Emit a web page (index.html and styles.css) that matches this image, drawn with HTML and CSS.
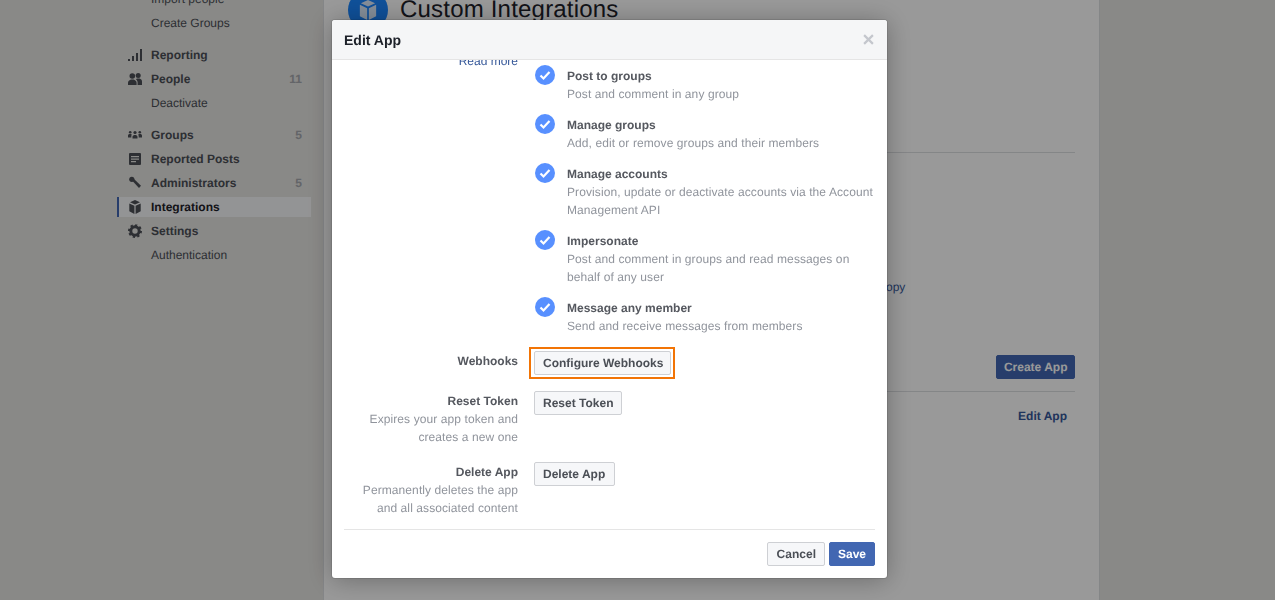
FILE: index.html
```html
<!DOCTYPE html>
<html>
<head>
  <title>Edit App</title>
  <link rel="stylesheet" href="styles.css">
</head>
<body>
  <div class="page">
    <nav class="sidebar">
      <div class="nav-group">
        <div class="nav-row sub"><span class="nav-label">Import people</span></div>
        <div class="nav-row sub"><span class="nav-label">Create Groups</span></div>
      </div>
      <div class="nav-group">
        <div class="nav-row">
          <svg class="nav-icon" viewBox="0 0 14 14"><path d="M0 11h2v2H0zM4 8h2v5H4zM8 5h2v8H8zM12 1h2v12h-2z"/></svg>
          <span class="nav-label">Reporting</span>
        </div>
        <div class="nav-row">
          <svg class="nav-icon" viewBox="0 0 14 14"><circle cx="4.300" cy="4" r="2.800"/><circle cx="10.200" cy="3.600" r="2.500"/><path d="M0 13v-2.200c0-1.800 1.600-2.600 3-3.300h2.600c1.400.7 3 1.500 3 3.300V13zM9.600 13v-2.600c0-1.300-.7-2.300-1.600-3l.8-.8h2.800c1.200.6 2.400 1.300 2.400 2.900V13z"/></svg>
          <span class="nav-label">People</span>
          <span class="count">11</span>
        </div>
        <div class="nav-row sub"><span class="nav-label">Deactivate</span></div>
      </div>
      <div class="nav-group">
        <div class="nav-row">
          <svg class="nav-icon" viewBox="0 0 14 14"><circle cx="7" cy="4.500" r="1.600"/><circle cx="2.200" cy="4.200" r="1.300"/><circle cx="11.800" cy="4.200" r="1.300"/><path d="M4.500 10.500V8.800c0-.9 1-1.600 1.600-1.800h1.800c.6.200 1.600.9 1.600 1.800v1.700zM0 9.500V7.500c0-.7.700-1.200 1.300-1.400h1.800l.7.600c-.4.400-.5 1-.5 1.600v1.200zM14 9.500V7.500c0-.7-.7-1.200-1.300-1.400h-1.800l-.7.600c.4.400.5 1 .5 1.600v1.200z"/></svg>
          <span class="nav-label">Groups</span>
          <span class="count">5</span>
        </div>
        <div class="nav-row">
          <svg class="nav-icon" viewBox="0 0 14 14"><path fill-rule="evenodd" d="M2 1h10a1 1 0 0 1 1 1v10a1 1 0 0 1-1 1H2a1 1 0 0 1-1-1V2a1 1 0 0 1 1-1zM3 4v1.200h8V4zM3 6.500v1.200h8V6.500zM3 9v1.200h5V9z"/></svg>
          <span class="nav-label">Reported Posts</span>
        </div>
        <div class="nav-row">
          <svg class="nav-icon" viewBox="0 0 14 14"><circle cx="3.800" cy="3.300" r="2.600"/><path d="M4.500 5l1.800-1.800 6.700 6.500-2 2.300z"/></svg>
          <span class="nav-label">Administrators</span>
          <span class="count">5</span>
        </div>
        <div class="nav-row active">
          <svg class="nav-icon" viewBox="0 0 14 14"><path d="M7 0l5 2.200L7 4.500 2 2.200zM1.300 3.400l5.100 2.300V14l-5.100-2.700zM12.700 3.400L7.600 5.700V14l5.100-2.700z"/></svg>
          <span class="nav-label">Integrations</span>
        </div>
        <div class="nav-row">
          <svg class="nav-icon" viewBox="0 0 14 14"><circle class="gear-ring" cx="7" cy="7" r="4.200"/><circle class="gear-teeth" cx="7" cy="7" r="6" pathLength="24"/></svg>
          <span class="nav-label">Settings</span>
        </div>
        <div class="nav-row sub"><span class="nav-label">Authentication</span></div>
      </div>
    </nav>

    <main class="content">
      <div class="content-head">
        <span class="head-icon">
          <svg viewBox="0 0 14 14"><path d="M7 0l5 2.200L7 4.500 2 2.200zM1.300 3.400l5.100 2.300V14l-5.100-2.700zM12.700 3.400L7.600 5.700V14l5.100-2.700z"/></svg>
        </span>
        <h1>Custom Integrations</h1>
      </div>
      <div class="content-line first"></div>
      <a class="copy-link">copy</a>
      <div class="create-row"><span class="btn primary">Create App</span></div>
      <div class="content-line"></div>
      <div class="edit-row"><a class="edit-link">Edit App</a></div>
    </main>
    <div class="rail"></div>
  </div>

  <div class="overlay">
    <div class="dialog">
      <div class="dialog-head">
        <span class="dialog-title">Edit App</span>
        <svg class="close" viewBox="0 0 10 10"><path d="M1 1l8 8M9 1l-8 8"/></svg>
      </div>
      <div class="dialog-body">
        <div class="form-row perms-row">
          <div class="form-label"><a class="read-more">Read more</a></div>
          <div class="perms">
            <div class="perm">
              <svg class="check" viewBox="0 0 20 20"><circle cx="10" cy="10" r="10"/><path d="M5.500 10.500l3 3 6-6.500"/></svg>
              <div class="perm-text"><b>Post to groups</b><p>Post and comment in any group</p></div>
            </div>
            <div class="perm">
              <svg class="check" viewBox="0 0 20 20"><circle cx="10" cy="10" r="10"/><path d="M5.500 10.500l3 3 6-6.500"/></svg>
              <div class="perm-text"><b>Manage groups</b><p>Add, edit or remove groups and their members</p></div>
            </div>
            <div class="perm">
              <svg class="check" viewBox="0 0 20 20"><circle cx="10" cy="10" r="10"/><path d="M5.500 10.500l3 3 6-6.500"/></svg>
              <div class="perm-text"><b>Manage accounts</b><p>Provision, update or deactivate accounts via the Account Management API</p></div>
            </div>
            <div class="perm">
              <svg class="check" viewBox="0 0 20 20"><circle cx="10" cy="10" r="10"/><path d="M5.500 10.500l3 3 6-6.500"/></svg>
              <div class="perm-text"><b>Impersonate</b><p>Post and comment in groups and read messages on behalf of any user</p></div>
            </div>
            <div class="perm">
              <svg class="check" viewBox="0 0 20 20"><circle cx="10" cy="10" r="10"/><path d="M5.500 10.500l3 3 6-6.500"/></svg>
              <div class="perm-text"><b>Message any member</b><p>Send and receive messages from members</p></div>
            </div>
          </div>
        </div>
        <div class="form-row">
          <div class="form-label"><b>Webhooks</b></div>
          <div><span class="focus-box"><button class="btn">Configure Webhooks</button></span></div>
        </div>
        <div class="form-row">
          <div class="form-label"><b>Reset Token</b><p>Expires your app token and creates a new one</p></div>
          <div><button class="btn">Reset Token</button></div>
        </div>
        <div class="form-row">
          <div class="form-label"><b>Delete App</b><p>Permanently deletes the app and all associated content</p></div>
          <div><button class="btn btn-delete">Delete App</button></div>
        </div>
      </div>
      <div class="dialog-foot">
        <button class="btn btn-cancel">Cancel</button>
        <button class="btn primary">Save</button>
      </div>
    </div>
  </div>
</body>
</html>
```

FILE: styles.css
```css
* {
  box-sizing: border-box;
  margin: 0;
  padding: 0;
}

html, body {
  height: 100%;
  overflow: hidden;
}

body {
  font-family: "Liberation Sans", Arial, sans-serif;
  font-size: 12px;
  line-height: 18px;
  color: #4b4f56;
  background-color: #e5e4e1;
  text-rendering: geometricPrecision;
}

/* page behind the dialog */
.page {
  display: flex;
  height: 600px;
}

.sidebar {
  width: 323px;
  flex: none;
  margin-top: -13px;
  padding-left: 117px;
}

.nav-group {
  margin-bottom: 8px;
}

.nav-row {
  display: flex;
  align-items: center;
  width: 194px;
  height: 24px;
  padding: 0 9px 0 11px;
  font-weight: bold;
}

.nav-row.sub {
  padding-left: 34px;
  font-weight: normal;
}

.nav-row.active {
  position: relative;
  color: #1d2129;
}

.nav-row.active::before {
  content: "";
  position: absolute;
  z-index: -1;
  left: 0;
  right: 0;
  top: 2px;
  bottom: 2px;
  background: #f6f7f9;
  border-left: 2px solid #4267b2;
}

.nav-icon {
  width: 14px;
  height: 14px;
  flex: none;
  margin-right: 9px;
  fill: #4b4f56;
}

.nav-label {
  flex: 1;
}

.count {
  color: #a5a8ad;
  font-weight: bold;
  font-size: 12px;
}

.gear-ring {
  fill: none;
  stroke: #4b4f56;
  stroke-width: 3;
}

.gear-teeth {
  fill: none;
  stroke: #4b4f56;
  stroke-width: 2;
  stroke-dasharray: 1.500 1.500;
}

.content {
  width: 777px;
  flex: none;
  padding: 0 24px;
  background: #fff;
  border-left: 1px solid #dddfe2;
  border-right: 1px solid #dddfe2;
}

.content-head {
  display: flex;
  align-items: center;
  gap: 12px;
  height: 40px;
  margin-top: -10px;
}

.head-icon {
  display: flex;
  align-items: center;
  justify-content: center;
  width: 40px;
  height: 40px;
  border-radius: 50%;
  background: #1a86ff;
}

.head-icon svg {
  width: 20px;
  height: 20px;
  fill: #fff;
  opacity: .85;
}

h1 {
  font-size: 24px;
  font-weight: normal;
  line-height: 40px;
  color: #1d2129;
  letter-spacing: .2px;
}

.content-line {
  height: 1px;
  background: #dddfe2;
}

.content-line.first {
  margin-top: 122px;
}

.copy-link {
  display: block;
  width: 30px;
  margin: 125px 0 0 532px;
  color: #365899;
}

.create-row {
  display: flex;
  justify-content: flex-end;
  margin-top: 59px;
  margin-bottom: 12px;
}

.create-row .btn {
  padding: 0 6.500px;
}

.edit-row {
  display: flex;
  justify-content: flex-end;
  padding: 15px 8px 0 0;
}

.edit-link {
  color: #365899;
  font-weight: bold;
}

/* dialog */
.overlay {
  position: fixed;
  inset: 0;
  background: rgba(0, 0, 0, .4);
}

.dialog {
  width: 555px;
  height: 558px;
  margin: 20px 0 0 332px;
  background: #fff;
  border-radius: 3px;
  box-shadow: 0 2px 26px rgba(0, 0, 0, .3), 0 0 0 1px rgba(0, 0, 0, .1);
  overflow: hidden;
}

.dialog-head {
  display: flex;
  align-items: center;
  justify-content: space-between;
  height: 40px;
  padding: 0 12px;
  background: #f5f6f7;
  border-bottom: 1px solid #e5e5e5;
}

.dialog-title {
  font-size: 14px;
  font-weight: bold;
  color: #1d2129;
}

.close {
  width: 11px;
  height: 11px;
  margin-right: 1px;
  fill: none;
  stroke: #c4c7cd;
  stroke-width: 2;
}

.dialog-body {
  height: 470px;
  margin: 0 12px;
  border-bottom: 1px solid #e5e5e5;
  overflow: hidden;
}

.dialog-body b {
  color: #55585f;
}

.dialog-body p {
  letter-spacing: .09px;
}

.form-row {
  display: flex;
  gap: 16px;
  margin-bottom: 16px;
}

.form-label {
  width: 174px;
  flex: none;
  padding-top: 1px;
  text-align: right;
}

.form-label p {
  color: #90949c;
}

.read-more {
  display: block;
  margin-top: -9px;
  color: #365899;
}

.perms {
  flex: 1;
  padding-top: 6px;
}

.perm {
  display: flex;
  gap: 12px;
  margin-bottom: 12px;
}

.perm:last-child {
  margin-bottom: 0;
}

.perm-text {
  padding-top: 1px;
}

.perm p {
  color: #90949c;
}

.check {
  width: 20px;
  height: 20px;
  flex: none;
  margin: -1px 0 0 1px;
}

.check circle {
  fill: #5890ff;
}

.check path {
  fill: none;
  stroke: #fff;
  stroke-width: 2.200;
}

.btn {
  display: inline-block;
  height: 24px;
  padding: 0 8px;
  font-family: inherit;
  font-size: 12px;
  font-weight: bold;
  line-height: 22px;
  color: #4b4f56;
  background: #f6f7f9;
  border: 1px solid #ced0d4;
  border-radius: 2px;
  text-rendering: geometricPrecision;
}

.btn.primary {
  color: #fff;
  background: #4267b2;
  border-color: #4267b2;
}

.btn-delete {
  padding-right: 9px;
}

.btn-cancel {
  padding-left: 9px;
}

/* orange highlight round the webhooks button */
.focus-box {
  display: inline-block;
  margin: -4px -4px -4px -5px;
  padding: 2px 2px 2px 3px;
  border: 2px solid #f27405;
}

.focus-box .btn {
  display: block;
  padding-right: 7px;
}

.dialog-foot {
  display: flex;
  justify-content: flex-end;
  gap: 4px;
  padding: 12px 12px 0;
}
```
